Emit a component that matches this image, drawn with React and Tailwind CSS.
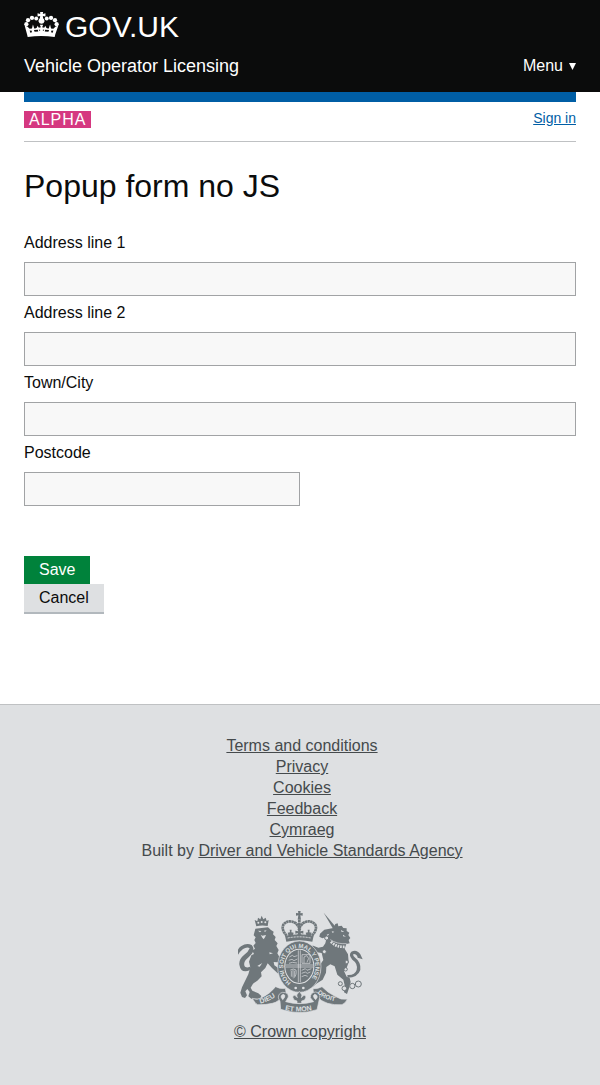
function Crown() {
  return (
    <svg viewBox="27 21 104 76" className="h-[25px] w-[35px] shrink-0" fill="#fff" aria-hidden="true">
      <path d="M75 20h9l-1 7 8-2v10l-8-2 1 7q5 4 4 10-2 7-9 7t-9-7q-1-6 4-10l1-7-8 2V25l8 2z" />
      <circle cx="63" cy="41" r="6" />
      <circle cx="50" cy="39" r="6.500" />
      <circle cx="38" cy="46" r="6.500" />
      <circle cx="95" cy="41" r="6" />
      <circle cx="108" cy="39" r="6.500" />
      <circle cx="120" cy="46" r="6.500" />
      <circle cx="33" cy="58" r="6.500" />
      <circle cx="125" cy="58" r="6.500" />
      <path d="M28 63l8 2 7 7 7-1 3-12 4 12q5 1 8-3l2-5 4 6 6-2-3-7h10l-3 7 6 2 4-6 2 5q3 4 8 3l4-12 3 12 7 1 7-7 8-2-9 26-2 8q-41-6-82 0l-2-8z" />
      <path fill="#0b0c0c" d="M43 77l7 1-1 5-4 1zM56 76l12-1 1 5-11 1zM90 75l12 1-2 5-11-1zM108 78l7-1-2 7-4-1zM71 74l5 2-4 3zM87 74l-5 2 4 3z" />
    </svg>
  );
}

function Crest() {
  return (
    <svg viewBox="24 30 375 312" className="h-[104px] w-[125px]" fill="#6f777b" aria-hidden="true">
      <defs>
        <path id="garter" d="M187 250A48 56 0 1 1 229 250" />
        <path id="dieu" d="M91 311Q122 304 152 278" />
        <path id="etmon" d="M165 330Q208 340 254 328" />
        <path id="droit" d="M262 279Q286 302 325 305" />
      </defs>

      <g transform="translate(12 18)">
        <path d="M67 61l-5-19 8 4 2-11 7 5 4-11 5 11 7-5 3 10 6-3-3 18q-18-4-34 1z" />
        <g fill="#dee0e2">
          <circle cx="73" cy="50" r="3" />
          <circle cx="83" cy="48" r="3" />
          <circle cx="94" cy="49" r="3" />
        </g>
        <path d="M64 68l38-4 9 8 8 5-2 8 8 8-3 9 9 10-4 8 7 12-4 10 5 9 13 2 8 8-3 8-9 3-13-3-12-1 2 10 15 10 13 2 5 10-9 6-14-4-17-16-13-14-7 14-13 13 2 12-13 13-13 9-7 12 5 9 18 8 9 8-3 8H52l-9-7 4-13-7-9-6 7 5 12-6 8-9-3-5-13 5-16 8-17 11-22 6-21-4-17 7-19 8-4-5-10 8-6-5-9 7-8-4-9 4-8-6-6z" />
        <path d="M47 193Q21 204 16 176q-2-16 14-29 13-9 17-20-7-6-20 2-10 8-16 19-4-18 10-27 17-12 32-4 11 12 0 27-8 9-18 18-8 11-2 20 8 5 18-1z" />
        <path fill="#dee0e2" d="M72 74l10 1-4 4zM90 74l8-1-5 5zM80 86l5 3 11-2-3 7-4 6-4-5zM106 139l11 3-10 3zM70 180l15-9-8 11z" />
      </g>

      <g>
        <path d="M204 33h8l-1 7 7-1v8l-7-1 2 13h-10l2-13-7 1v-8l7 1z" />
        <g fill="none" stroke="#6f777b" strokeWidth="8" strokeDasharray="7 1">
          <path d="M170 107Q152 87 161 73q14-16 37-3l10 13" />
          <path d="M246 107q18-20 9-34-14-16-37-3l-10 13" />
          <path d="M208 60v27" />
        </g>
        <path d="M202 86h12l-3 8 9-2v9l-8-2 3 10h-14l3-10-8 2v-9l9 2zM179 89h6l-1 8 7 1-3 11h-12l-3-11 7-1zM233 89h6l-1 8 7 1-3 11h-12l-3-11 7-1z" />
        <path d="M165 107q43-9 86 0l-4 18q-39-9-78 0z" />
        <path d="M173 114q35-7 70 0" fill="none" stroke="#dee0e2" strokeWidth="3" strokeDasharray="6 3" />
      </g>

      <g transform="translate(207 18)">
        <path d="M74 20l37 44-8 6z" />
        <path d="M103 66l6-12 7-2 2 9 10-2 5 7 10 1v8l8 5-3 7 6 9-5 6 3 10-10 2-5 14 10 17 2 24-6 16-8 10 8 17 9 4 3 12-5 19-6 17-9-5 2-21-4-17-18-15-8-25-13-6-12 8-1 17-10 21-19 12-12 11-3-13 20-17 9-17-2-22 9-13-5-21-14-2-13 3 6 12 10 8-4 11-9-5-9-16-11-11 9-7-11-6 3-7 18-2 15 6 14-3 7-10 3-12-3-6-9 3-9-5 2-9 13-12z" />
        <path fill="#dee0e2" d="M98 76l8 1-5 4zM83 86l8-3-5 7zM126 72l10 6-9-1zM132 86l9 6-9-1z" />
        <path d="M96 107q16 18 44 15" fill="none" stroke="#dee0e2" strokeWidth="8" strokeDasharray="5 3" />
        <path d="M94 101q20 14 49 12" fill="none" stroke="#dee0e2" strokeWidth="2" />
        <path d="M145 207q22 2 28-15 5-19-13-31-13-15-3-24 16-9 27 8l7 15-15-5q-2-11-12-11-4 3 3 10 20 15 17 38-8 23-38 23z" />
        <g fill="#dee0e2" stroke="#6f777b" strokeWidth="3">
          <circle cx="83" cy="96" r="6" />
          <circle cx="76" cy="137" r="6" />
          <circle cx="143" cy="168" r="5" />
          <circle cx="140" cy="190" r="5" />
          <circle cx="124" cy="233" r="6" />
          <circle cx="136" cy="247" r="7" />
          <circle cx="160" cy="240" r="8" />
          <circle cx="178" cy="234" r="9" />
        </g>
      </g>

      <g>
        <ellipse cx="208" cy="200" rx="65" ry="77" stroke="#dee0e2" strokeWidth="2" />
        <ellipse cx="208" cy="199" rx="45" ry="53" fill="#dee0e2" />
        <ellipse cx="208" cy="199" rx="42" ry="50" />
        <g stroke="#dee0e2" fill="none" strokeWidth="2">
          <path d="M205 151v96M211 151v96M167 195h82M167 201h82" />
          <path d="M178 171l9-5 5 4 10-3M176 181l10-3 6 4 10-5M177 190l10-3 14 2M216 164h24v26h-24zM222 189v-18l8-4 6 8-5 12M215 211l11-5 5 5 13-5M215 220l11-4 6 4 9-4M215 230l10-4 8 3M181 210q10-6 17 0 3 16-8 25M184 212v18M189 209v23M194 212v18" />
        </g>
        <text fontFamily="Liberation Sans, sans-serif" fontSize="18" fontWeight="700" fill="#dee0e2">
          <textPath href="#garter" startOffset="4">HONI SOIT QUI MAL Y PENSE</textPath>
        </text>
        <circle cx="197" cy="264" r="4" fill="#dee0e2" />
        <circle cx="220" cy="264" r="4" fill="#dee0e2" />
      </g>

      <g stroke="#dee0e2" strokeWidth="2">
        <path d="M67 295q15 7 28-2 24-11 42-33 14 8 29 5l3 17-14 6q-8 18-28 22-19 5-44 4-10-5-16-19z" />
        <path d="M352 297q-18 4-37-8-22-11-39-29-15 8-27 6l2 18 11 5q10 15 31 21 20 6 43 4 11-4 16-17z" />
        <path d="M145 294q-1-14 13-17 18 0 17 14l-8 14q42 12 84 0l-10-12q0-16 16-17 15 2 12 17l-8 36q-54 18-109-1l-2-24z" />
        <path fill="#dee0e2" d="M153 291q1-8 8-8 7 3 1 12l-4 4zM262 291q-1-8-8-8-7 3-1 12l4 4z" />
        <path d="M208 274l8 11-2 8q10-13 14-2l-4 9-9 3v7h-14v-7l-9-3-4-9q4-11 14 2l-2-8z" />
      </g>
      <g fontFamily="Liberation Sans, sans-serif" fontWeight="700" fill="#dee0e2">
        <text fontSize="21"><textPath href="#dieu">DIEU</textPath></text>
        <text fontSize="21"><textPath href="#etmon">ET MON</textPath></text>
        <text fontSize="19"><textPath href="#droit">DROIT</textPath></text>
      </g>
    </svg>
  );
}

const fields = [
  { id: "address-1", label: "Address line 1", width: "w-full" },
  { id: "address-2", label: "Address line 2", width: "w-full" },
  { id: "town", label: "Town/City", width: "w-full" },
  { id: "postcode", label: "Postcode", width: "w-1/2" },
];

const footerLinks = ["Terms and conditions", "Privacy", "Cookies", "Feedback", "Cymraeg"];

export default function App() {
  return (
    <div className="flex min-h-screen flex-col bg-white font-['Liberation_Sans',Arial,sans-serif] text-base text-[#0b0c0c]">
      <header className="bg-[#0b0c0c] px-6 pt-2 pb-2 text-white">
        <a href="#" className="flex h-9 items-start gap-[6px] pt-1">
          <Crown />
          <span className="text-[30px] leading-[30px]">GOV.UK</span>
        </a>
        <div className="flex h-10 items-center justify-between pt-1">
          <a href="#" className="text-lg leading-6">Vehicle Operator Licensing</a>
          <button type="button" className="flex items-center gap-[6px] leading-6">
            Menu
            <svg viewBox="0 0 7 7" className="h-[7px] w-[7px]" fill="currentColor" aria-hidden="true">
              <path d="M0 0h7L3.500 7z" />
            </svg>
          </button>
        </div>
      </header>

      <div className="px-6">
        <div className="h-[10px] bg-[#005ea5]" />
        <div className="flex h-10 items-start justify-between border-b border-[#bfc1c3] pt-[9px]">
          <strong className="bg-[#d53880] px-[5px] text-base leading-[17px] font-normal tracking-[1px] text-white">ALPHA</strong>
          <a href="#" className="text-sm leading-[15px] text-[#005ea5] underline">Sign in</a>
        </div>
      </div>

      <main className="grow px-6 pt-6 pb-[90px]">
        <h1 className="text-[32px] leading-10">Popup form no JS</h1>
        <form className="pt-[27px]">
          {fields.map((f) => (
            <div key={f.id} className="flex flex-col gap-[9px] pb-[7px]">
              <label htmlFor={f.id} className="leading-5">{f.label}</label>
              <input id={f.id} type="text" className={`${f.width} h-[34px] border border-[#a1a3a5] bg-[#f8f8f8] px-1`} />
            </div>
          ))}
          <div className="flex flex-col items-start pt-[43px]">
            <button type="submit" className="h-7 bg-[#00823b] px-[15px] leading-7 text-white">Save</button>
            <button type="button" className="h-[30px] border-b-2 border-[#b2b8bd] bg-[#dee0e2] px-[15px] leading-7">Cancel</button>
          </div>
        </form>
      </main>

      <footer className="flex flex-col items-center border-t border-[#bfc1c3] bg-[#dee0e2] px-6 pt-[30px] pb-[42px] text-[#454a4c]">
        <ul className="pl-1 text-center leading-[21px]">
          {footerLinks.map((t) => (
            <li key={t}><a href="#" className="underline">{t}</a></li>
          ))}
          <li>Built by <a href="#" className="underline">Driver and Vehicle Standards Agency</a></li>
        </ul>
        <a href="#" className="flex flex-col items-center gap-[7px] pt-[49px] leading-[22px] underline">
          <Crest />
          © Crown copyright
        </a>
      </footer>
    </div>
  );
}
